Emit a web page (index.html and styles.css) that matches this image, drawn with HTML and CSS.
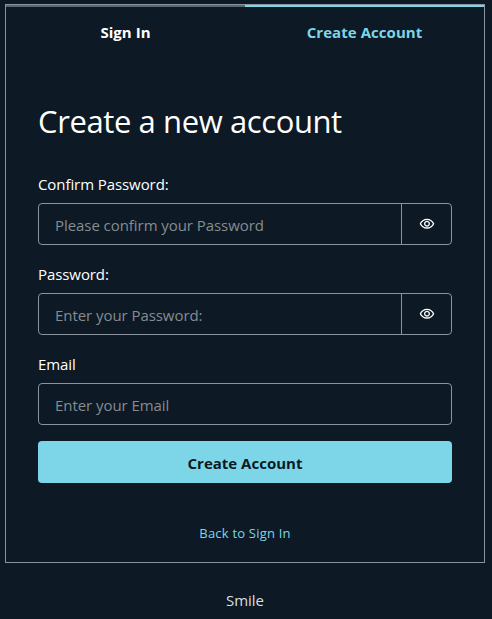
FILE: index.html
```html
<!DOCTYPE html>
<html lang="en">
<head>
<meta charset="utf-8">
<title>Create Account</title>
<link rel="stylesheet" href="styles.css">
</head>
<body>
<main class="card">
  <div class="tabs" role="tablist">
    <button class="tab" type="button" role="tab">Sign In</button>
    <button class="tab active" type="button" role="tab">Create Account</button>
  </div>
  <form class="form">
    <h3 class="title">Create a new account</h3>
    <div class="field">
      <label class="label" for="confirm">Confirm Password:</label>
      <div class="group">
        <input class="input" id="confirm" type="password" placeholder="Please confirm your Password">
        <button class="eye" type="button" aria-label="Show password"><svg viewBox="0 0 24 24"><path d="M12 6C15.79 6 19.17 8.13 20.82 11.5C19.17 14.87 15.79 17 12 17C8.21 17 4.83 14.87 3.18 11.5C4.83 8.13 8.21 6 12 6ZM12 4C7 4 2.73 7.11 1 11.5C2.73 15.89 7 19 12 19C17 19 21.27 15.89 23 11.5C21.27 7.11 17 4 12 4ZM12 9C13.38 9 14.5 10.12 14.5 11.5C14.5 12.88 13.38 14 12 14C10.62 14 9.5 12.88 9.5 11.5C9.5 10.12 10.62 9 12 9ZM12 7C9.52 7 7.5 9.02 7.5 11.5C7.5 13.98 9.52 16 12 16C14.48 16 16.5 13.98 16.5 11.5C16.5 9.02 14.48 7 12 7Z"/></svg></button>
      </div>
    </div>
    <div class="field">
      <label class="label" for="password">Password:</label>
      <div class="group">
        <input class="input" id="password" type="password" placeholder="Enter your Password:">
        <button class="eye" type="button" aria-label="Show password"><svg viewBox="0 0 24 24"><path d="M12 6C15.79 6 19.17 8.13 20.82 11.5C19.17 14.87 15.79 17 12 17C8.21 17 4.83 14.87 3.18 11.5C4.83 8.13 8.21 6 12 6ZM12 4C7 4 2.73 7.11 1 11.5C2.73 15.89 7 19 12 19C17 19 21.27 15.89 23 11.5C21.27 7.11 17 4 12 4ZM12 9C13.38 9 14.5 10.12 14.5 11.5C14.5 12.88 13.38 14 12 14C10.62 14 9.5 12.88 9.5 11.5C9.5 10.12 10.62 9 12 9ZM12 7C9.52 7 7.5 9.02 7.5 11.5C7.5 13.98 9.52 16 12 16C14.48 16 16.5 13.98 16.5 11.5C16.5 9.02 14.48 7 12 7Z"/></svg></button>
      </div>
    </div>
    <div class="field">
      <label class="label" for="email">Email</label>
      <div class="group">
        <input class="input" id="email" type="email" placeholder="Enter your Email">
      </div>
    </div>
    <button class="submit" type="button">Create Account</button>
  </form>
  <div class="back"><button class="link" type="button">Back to Sign In</button></div>
</main>
<footer class="footer">Smile</footer>
</body>
</html>
```
FILE: styles.css
```css
* { box-sizing: border-box; }
body {
  margin: 0;
  padding: 4px 7px 0 5px;
  height: 619px;
  overflow: hidden;
  background: #0d1924;
  color: #fff;
  font: 16px/24px "Open Sans", "Noto Sans", sans-serif;
}
button, input { font: inherit; color: inherit; background: none; border: 0; margin: 0; padding: 0; }
.card { width: 480px; height: 559px; border: 1px solid #89949f; }
.tabs { display: flex; }
.tab {
  flex: 1;
  height: 54px;
  padding-bottom: 2px;
  border-top: 2px solid #5c6670;
  font-size: 15px;
  font-weight: 700;
  letter-spacing: 0.05px;
}
.tab.active { border-color: #7dd6e8; color: #7dd6e8; }
.form { display: flex; flex-direction: column; gap: 16px; padding: 42px 32px 0; }
.title {
  margin: 0 0 14px;
  font-size: 31px;
  font-weight: 400;
  line-height: 40px;
  letter-spacing: -0.4px;
  white-space: nowrap;
}
.field { display: flex; flex-direction: column; gap: 8px; }
.label { height: 24px; line-height: 26px; font-size: 15px; letter-spacing: -0.08px; }
.group {
  display: flex;
  height: 42px;
  border: 1px solid #89949f;
  border-radius: 4px;
}
.input { flex: 1; min-width: 0; padding: 2px 16px 0; outline: 0; font-size: 15px; letter-spacing: -0.06px; }
.input::placeholder { color: #858c92; opacity: 1; }
.eye {
  display: flex;
  align-items: center;
  justify-content: center;
  width: 50px;
  border-left: 1px solid #89949f;
}
.eye svg { width: 16px; height: 16px; fill: #fff; }
.submit {
  height: 42px;
  border-radius: 4px;
  background: #7dd6e8;
  color: #0d1924;
  font-size: 15px;
  font-weight: 700;
  padding-top: 2px;
}
.back { display: flex; justify-content: center; padding-top: 39px; }
.link { color: #7dd6e8; font-size: 13px; line-height: 22px; letter-spacing: 0.2px; }
.footer { width: 480px; padding-top: 25px; text-align: center; font-size: 15px; color: #dcdee0; }
```
